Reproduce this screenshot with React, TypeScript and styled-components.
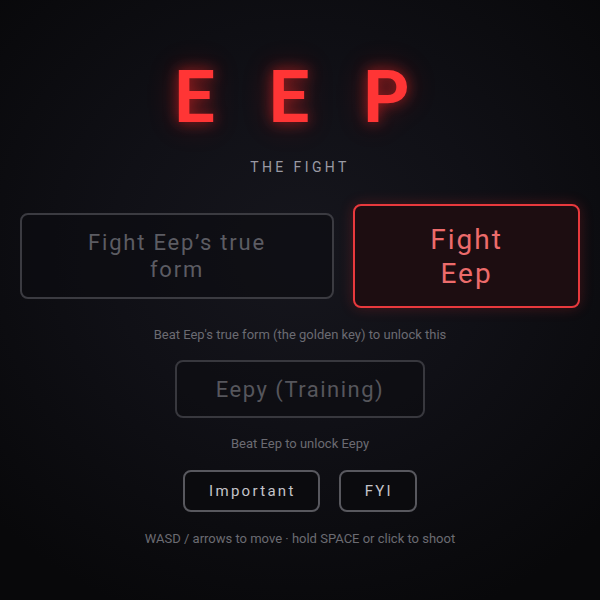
import React from "react";
import styled, { createGlobalStyle } from "styled-components";

const Global = createGlobalStyle`
  html, body {
    margin: 0;
    padding: 0;
    background: #070709;
  }
  body {
    font-family: Roboto, "Liberation Sans", sans-serif;
  }
`;

const Page = styled.div`
  width: 600px;
  height: 600px;
  overflow: hidden;
  background: radial-gradient(ellipse 70% 65% at 50% 42%, #16161d 0%, #101016 45%, #08080a 100%);
  display: flex;
  flex-direction: column;
  align-items: center;
  box-sizing: border-box;
  padding-top: 62px;
`;

const Title = styled.h1`
  margin: 0;
  font-family: Roboto, "Liberation Sans", sans-serif;
  font-weight: 700;
  font-size: 72px;
  line-height: 72px;
  letter-spacing: 54px;
  padding-left: 38px;
  color: #ff3535;
  text-shadow: 0 0 14px rgba(255, 40, 40, 0.55), 0 0 30px rgba(255, 30, 30, 0.3);
`;

const Subtitle = styled.div`
  margin-top: 26px;
  font-size: 14px;
  line-height: 14px;
  letter-spacing: 3.4px;
  color: #9a9aa4;
`;

const ModeRow = styled.div`
  margin-top: 30px;
  width: 560px;
  display: flex;
  align-items: center;
  justify-content: space-between;
`;

const BigButton = styled.button<{ $active?: boolean }>`
  box-sizing: border-box;
  font-family: Roboto, "Liberation Sans", sans-serif;
  border-radius: 8px;
  cursor: pointer;
  text-align: center;
  line-height: 1.2;
  width: ${(p) => (p.$active ? "227px" : "314px")};
  padding: ${(p) => (p.$active ? "17px 56px 16px" : "15px 50px 14px")};
  font-size: ${(p) => (p.$active ? "28px" : "22px")};
  letter-spacing: ${(p) => (p.$active ? "2px" : "1.8px")};
  border: 2px solid ${(p) => (p.$active ? "#e8393d" : "#3b3b41")};
  background: ${(p) => (p.$active ? "#1d0d11" : "rgba(12,12,16,0.6)")};
  color: ${(p) => (p.$active ? "#ec6b6b" : "#5c5c63")};
  box-shadow: ${(p) => (p.$active ? "0 0 14px rgba(255, 45, 45, 0.22)" : "none")};
`;

const Hint = styled.div<{ $gap?: number }>`
  margin-top: ${(p) => p.$gap ?? 18}px;
  font-size: 13px;
  line-height: 18px;
  color: #6b6b72;
`;

const TrainButton = styled.button`
  box-sizing: border-box;
  margin-top: 16px;
  width: 250px;
  height: 58px;
  font-family: Roboto, "Liberation Sans", sans-serif;
  font-size: 22px;
  letter-spacing: 1.5px;
  padding-top: 2px;
  color: #56565c;
  background: rgba(12, 12, 16, 0.5);
  border: 2px solid #38383e;
  border-radius: 8px;
  cursor: pointer;
`;

const SmallRow = styled.div`
  margin-top: 17px;
  display: flex;
  gap: 19px;
`;

const SmallButton = styled.button`
  box-sizing: border-box;
  height: 42px;
  padding: 0 22px 0 24px;
  font-family: Roboto, "Liberation Sans", sans-serif;
  font-size: 15px;
  letter-spacing: 2.3px;
  color: #c4c4c9;
  background: #0b0b0e;
  border: 2px solid #58585e;
  border-radius: 8px;
  cursor: pointer;
`;

export default function App() {
  return (
    <>
      <Global />
      <Page>
        <Title>EEP</Title>
        <Subtitle>THE FIGHT</Subtitle>
        <ModeRow>
          <BigButton>Fight Eep’s true form</BigButton>
          <BigButton $active>Fight Eep</BigButton>
        </ModeRow>
        <Hint $gap={18}>Beat Eep's true form (the golden key) to unlock this</Hint>
        <TrainButton>Eepy (Training)</TrainButton>
        <Hint $gap={17}>Beat Eep to unlock Eepy</Hint>
        <SmallRow>
          <SmallButton>Important</SmallButton>
          <SmallButton>FYI</SmallButton>
        </SmallRow>
        <Hint $gap={18}>WASD / arrows to move · hold SPACE or click to shoot</Hint>
      </Page>
    </>
  );
}
